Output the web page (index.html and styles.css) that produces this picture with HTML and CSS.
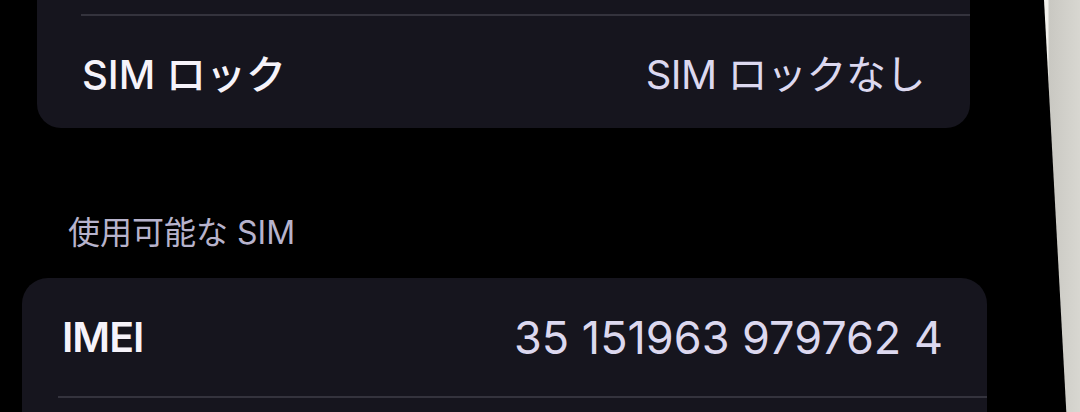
FILE: index.html
```html
<!DOCTYPE html>
<html lang="ja">
<head>
  <meta charset="UTF-8" />
  <title>情報</title>
  <link rel="stylesheet" href="styles.css">
</head>
<body>

  <div class="pantalla">
    <!-- Grupo superior -->
    <div class="grupo grupo-arriba">
      <div class="separador"></div>
      <div class="fila">
        <span class="etiqueta">SIM ロック</span>
        <span class="valor">SIM ロックなし</span>
      </div>
    </div>

    <h2 class="titulo">使用可能な SIM</h2>

    <!-- Grupo inferior -->
    <div class="grupo grupo-abajo">
      <div class="fila fila-imei">
        <span class="etiqueta fuerte">IMEI</span>
        <span class="valor numero">35 151963 979762 4</span>
      </div>
      <div class="separador"></div>
    </div>
  </div>

  <div class="borde"></div>

</body>
</html>
```

FILE: styles.css
```css
body {
  margin: 0;
  background-color: #000;
  font-family: Inter, "Noto Sans CJK JP", sans-serif;
  display: flex;
  height: 412px;
  overflow: hidden;
}
.pantalla {
  flex: 1;
  display: flex;
  flex-direction: column;
}

/* Grupos tipo tarjeta */
.grupo {
  background-color: #16151e;
}
.grupo-arriba {
  margin-left: 37px;
  width: 933px;
  height: 128px;
  border-radius: 0 0 24px 24px;
  padding-top: 14px;
  box-sizing: border-box;
}
.grupo-abajo {
  margin-left: 22px;
  width: 965px;
  margin-top: 25px;
  flex: 1;
  border-radius: 26px 26px 0 0;
}
.separador {
  height: 2px;
  background-color: #34333d;
  margin-left: 44px;
}
.grupo-abajo .separador {
  margin-left: 36px;
}

.fila {
  display: flex;
  justify-content: space-between;
  align-items: center;
  height: 112px;
  padding: 0 45px;
}
.fila-imei {
  height: 118px;
  padding: 0 44px 0 40px;
}
.etiqueta {
  color: #f6f3fa;
  font-size: 40px;
  font-weight: 500;
}
.etiqueta.fuerte {
  font-size: 41px;
  font-weight: 600;
  letter-spacing: -1px;
}
.valor {
  color: #dcd8ef;
  font-size: 40px;
  letter-spacing: -0.5px;
}
.valor.numero {
  font-size: 45px;
  letter-spacing: 0;
}

.titulo {
  margin: 85px 0 0 68px;
  font-size: 32px;
  font-weight: 400;
  line-height: 40px;
  color: #b7b3cc;
}

/* Canto del telefono */
.borde {
  width: 36px;
  background: linear-gradient(90deg, #f2f1ec 0, #f2f1ec 4px, #c9c8c2 5px, #d8d7d1 100%);
  clip-path: polygon(0 0, 100% 0, 100% 100%, 62% 100%);
}
```
